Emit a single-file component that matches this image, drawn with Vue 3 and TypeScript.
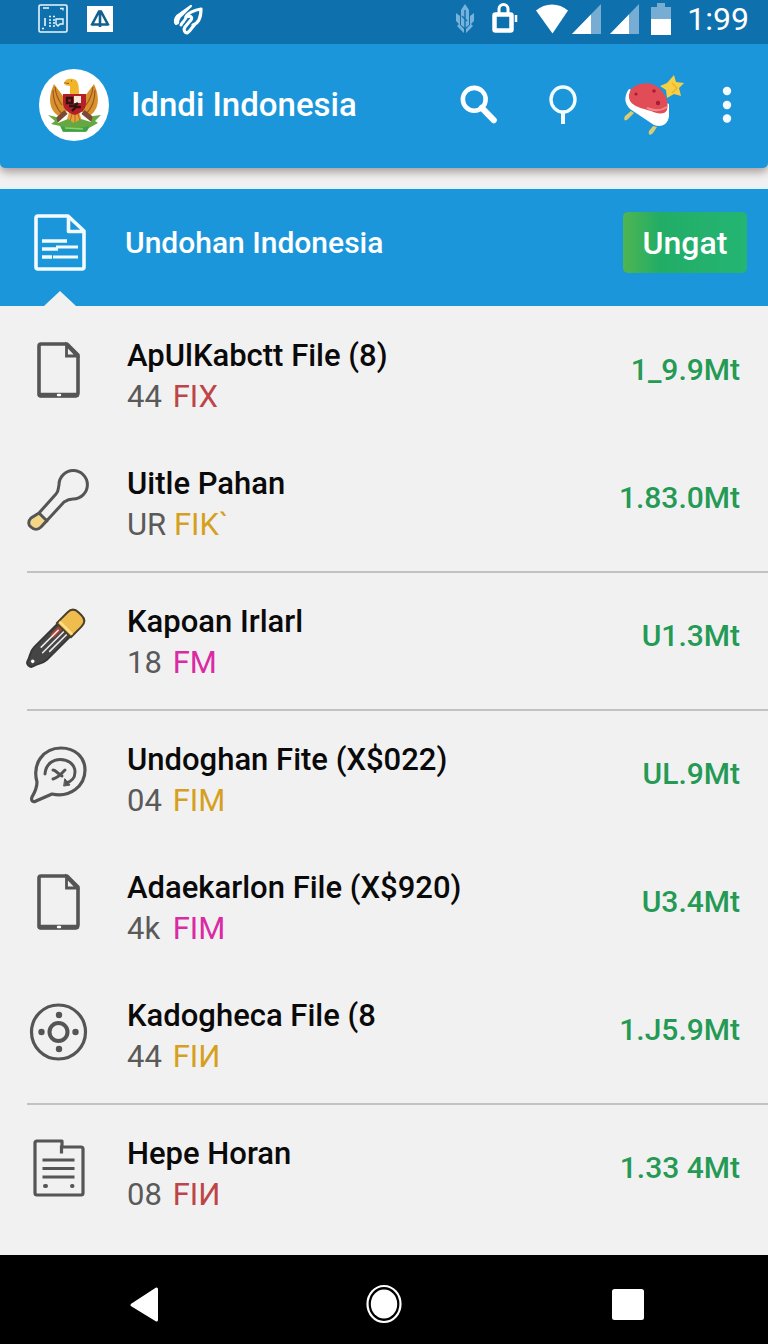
<script setup lang="ts">
type IconName = 'page' | 'brush' | 'pencil' | 'chat' | 'disc' | 'notes'
type Tone = 'red' | 'amber' | 'pink'

interface FileRow {
  icon: IconName
  title: string
  count: string
  tag: string
  tone: Tone
  size: string
}

const groups: FileRow[][] = [
  [
    { icon: 'page', title: 'ApUlKabctt File (8)', count: '44', tag: 'FIX', tone: 'red', size: '1_9.9Mt' },
    { icon: 'brush', title: 'Uitle Pahan', count: 'UR', tag: 'FIK`', tone: 'amber', size: '1.83.0Mt' },
  ],
  [{ icon: 'pencil', title: 'Kapoan Irlarl', count: '18', tag: 'FM', tone: 'pink', size: 'U1.3Mt' }],
  [
    { icon: 'chat', title: 'Undoghan Fite (X$022)', count: '04', tag: 'FIM', tone: 'amber', size: 'UL.9Mt' },
    { icon: 'page', title: 'Adaekarlon File (X$920)', count: '4k', tag: 'FIM', tone: 'pink', size: 'U3.4Mt' },
    { icon: 'disc', title: 'Kadogheca File (8', count: '44', tag: 'FIИ', tone: 'amber', size: '1.J5.9Mt' },
  ],
  [{ icon: 'notes', title: 'Hepe Horan', count: '08', tag: 'FIИ', tone: 'red', size: '1.33 4Mt' }],
]
</script>

<template>
  <div class="screen">
    <div class="status">
      <div class="status-side">
        <svg width="30" height="30" viewBox="0 0 30 30" fill="none" stroke="#e9f6fc">
          <rect x="1" y="1" width="28" height="27" rx="1.5" stroke-width="1.6" />
          <path d="M4 24.500h2M5 4h6M22 4.500h3v2" stroke-width="1.300" />
          <path d="M7 14v8M11 12.500h2M11 16h2M11 19h2M11 22h2M15 12.500h2M15 16h2M15 19h2M15 22h2" stroke-width="1.600" />
          <path d="M18 15h7v5h-3l-2 2-2-2z" stroke-width="1.400" />
        </svg>
        <svg class="after-box" width="26" height="30" viewBox="0 0 26 30">
          <path d="M0 2h26v26H0z" fill="#fff" />
          <path d="M4.500 21.500 12 7.500h2l7.500 14M5 20.500h16M13 8v15" fill="none" stroke="#12608f" stroke-width="2.600" />
        </svg>
        <svg class="after-letter" width="30" height="32" viewBox="0 0 30 32" fill="none" stroke="#fff" stroke-linecap="round" stroke-linejoin="round">
          <path d="M18 3 4 13c-2 2-3 6-1 8l2-1c0-4 2-7 5-9z" stroke-width="2.200" fill="#fff" />
          <path d="M13 14c1-4 9-7 15-8 0 8-2 14-8 16M13 14c4-2 8 0 4 4l-5 6c-2 3 0 6 2 6 4-2 5-6 8-9" stroke-width="3.200" />
          <path d="M13 14c0 3-4 5-5 8" stroke-width="3" />
        </svg>
      </div>
      <div class="status-side">
        <svg width="18" height="30" viewBox="0 0 18 30" fill="#77b2dc">
          <path d="M9 0 5 6v15l4 3 4-3V6zM0 9l4 3v9l4 4v4L1 22l2-2-3-3zM18 9l-4 3v9l-4 4v4l7-7-2-2 3-3z" />
          <path d="M9 6v21M6 12l5 5" stroke="#0e71ad" stroke-width="1.400" />
        </svg>
        <svg class="spaced" width="26" height="30" viewBox="0 0 26 30" fill="none" stroke="#fff">
          <path d="M7 9V5a4 4 0 0 1 9 0v4" stroke-width="3" />
          <rect x="2.500" y="10.500" width="17" height="16" rx="1" stroke-width="4.500" />
          <path d="M24 11v7" stroke-width="2.500" />
        </svg>
        <svg class="spaced" width="32" height="30" viewBox="0 0 32 30">
          <path d="M0 6.500C9-1.500 23-1.500 32 6.500L16.500 29.500z" fill="#fff" />
        </svg>
        <svg class="signal" width="29" height="30" viewBox="0 0 29 30">
          <path d="M29 0v30H0z" fill="#77add3" />
          <path d="M19 10.500V30H0z" fill="#fff" />
        </svg>
        <svg class="signal second" width="29" height="30" viewBox="0 0 29 30">
          <path d="M29 0v30H0z" fill="#77add3" />
          <path d="M19 10.500V30H0z" fill="#fff" />
        </svg>
        <svg class="battery" width="20" height="32" viewBox="0 0 20 32">
          <path d="M0 4h6V0h8v4h6v14H0z" fill="#77add3" />
          <path d="M0 16h20v16H0z" fill="#fff" />
        </svg>
        <time class="clock">1:99</time>
      </div>
    </div>

    <header class="bar">
      <svg class="emblem" width="70" height="72" viewBox="0 0 70 72">
        <ellipse cx="35" cy="36" rx="35" ry="36" fill="#fff" />
        <path d="M15 15c-6 13-6 26 6 33l7-6-4-15zM55 15c6 13 6 26-6 33l-7-6 4-15z" fill="#d9912e" />
        <path d="M14 21c0 10 3 18 9 24M16 18c1 9 4 14 7 18M56 21c0 10-3 18-9 24M54 18c-1 9-4 14-7 18" fill="none" stroke="#9d5720" stroke-width="1.200" />
        <path d="M25 14c1-4 5-5 9-4 5 1 6 5 6 15h-9v-8l-6-1 4-2z" fill="#f0b52b" />
        <path d="M25 14l5 .5M32 12h1" stroke="#8d5a17" stroke-width="1.200" />
        <path d="M27 43 17 52M44 43l10 8" stroke="#7b4a36" stroke-width="5" />
        <path d="M30 43h10l5 15H26z" fill="#e9a23a" />
        <path d="M33 45l-3 11M36 45v12M39 45l3 11" stroke="#b56c20" stroke-width="1" />
        <path d="M24 25h23v9c0 7-5 10-11 12-7-2-12-6-12-12z" fill="#b61f28" />
        <path d="M35 27h7v7h-7z" fill="#f6e9db" />
        <path d="M28 29h5v5h-5zM30 37h5l4-3M33 42l4-4h5" fill="none" stroke="#2a1513" stroke-width="2.400" />
        <path d="M9 46l8 2 2 6 10-4 6 4 7-4 10 3 2-6 8-1-6 6 3 2-9 5-3 4H24l-3-6-9-2 4-3z" fill="#64a842" />
        <path d="M22 57c8 3 18 3 28 0l-2 5H24z" fill="#38a34b" />
        <path d="M26 59l18 1" stroke="#8dd074" stroke-width="1.500" />
      </svg>
      <h1>Idndi Indonesia</h1>
      <div class="actions">
        <button class="action" aria-label="Search">
          <svg width="38" height="42" viewBox="0 0 40 42" fill="none" stroke="#fff">
            <circle cx="15" cy="15" r="12" stroke-width="4.800" />
            <path d="m23 24 12.500 13" stroke-width="6.500" stroke-linecap="round" />
          </svg>
        </button>
        <button class="action" aria-label="Locate">
          <svg width="30" height="40" viewBox="0 0 30 40" fill="none" stroke="#f4fcff">
            <ellipse cx="15" cy="14.500" rx="12" ry="12.500" stroke-width="3.400" />
            <path d="M15 27v12" stroke-width="4" />
          </svg>
        </button>
        <button class="action wide" aria-label="Gift">
          <svg width="62" height="62" viewBox="0 0 62 62">
            <path d="M9 37 3 42c-2 4 0 6 3 3l6-6zM31 52l-4 5c-1 4 1 5 4 2l4-6z" fill="#d9cc72" />
            <path d="M7 15c-5 7-5 14 1 20l24 16c8 3 14-1 15-9V30z" fill="#fff" />
            <path d="M8 17c5-9 22-11 30-2 6 6 9 13 7 21-2 5-10 4-16 1C19 34 6 32 7 21z" fill="#e24c57" />
            <path d="M25 34c7 3 14 3 20-1" stroke="#f28a8e" stroke-width="2" fill="none" />
            <circle cx="14" cy="20" r="1.600" fill="#a51f31" />
            <circle cx="32" cy="17" r="1.800" fill="#a51f31" />
            <circle cx="36" cy="29" r="2.200" fill="#a51f31" />
            <path d="m52 1 2 7 8 1-5 5 2 8-7-2-7 4-1-8-6-4 7-3z" fill="#f7cf45" />
            <path d="m50 9 5 5-5 5" fill="none" stroke="#eab62e" stroke-width="1.500" />
          </svg>
        </button>
        <button class="action slim" aria-label="More options">
          <svg width="10" height="38" viewBox="0 0 10 38" fill="#f4fcff">
            <circle cx="5" cy="5" r="4.200" />
            <circle cx="5" cy="19" r="4.200" />
            <circle cx="5" cy="32.500" r="4.200" />
          </svg>
        </button>
      </div>
    </header>

    <section class="banner">
      <svg class="banner-icon" width="64" height="64" viewBox="0 0 64 64" fill="none" stroke="#f2fbff" stroke-width="3.600" stroke-linejoin="round">
        <path d="M10 5h30l16 15v36a2 2 0 0 1-2 2H10a2 2 0 0 1-2-2V7a2 2 0 0 1 2-2z" />
        <path d="M40.500 5v15.500H56" />
        <path d="M14 30h25M14 38h16M14 46h10" />
        <path d="M28 36h22M25 46h25" stroke-width="3" />
      </svg>
      <h2>Undohan Indonesia</h2>
      <button class="cta">Ungat</button>
    </section>

    <main class="files">
      <ul v-for="(group, g) in groups" :key="g" class="group">
        <li v-for="row in group" :key="row.title" class="row">
          <svg class="icon" width="64" height="64" viewBox="0 0 64 64" fill="none" stroke="#555" stroke-width="3.600" stroke-linejoin="round" stroke-linecap="round">
            <template v-if="row.icon === 'page'">
              <path d="M14 5h26l11 11v38a3 3 0 0 1-3 3H14a2 2 0 0 1-2-2V7a2 2 0 0 1 2-2z" />
              <path d="M39.500 6v11H50z" stroke-width="2.800" stroke-linejoin="miter" />
              <path d="M13 56h37" stroke-width="4.500" />
              <path d="M31 56h2" stroke="#fff" stroke-width="2.400" />
            </template>
            <template v-else-if="row.icon === 'brush'">
              <path d="m12 46 9 9-7 6c-3 3-7 3-9 0-3-2-3-6 0-9z" fill="#f4d789" stroke="none" />
              <path d="M12 46 29 27c3-3 2-6 3-9a14.200 14.200 0 1 1 14 14c-4 0-6 1-9 3L14 60c-3 3-7 3-10 0-3-2-3-6 0-9zM12 46l8 8" stroke-width="3" />
            </template>
            <template v-else-if="row.icon === 'pencil'">
              <g transform="translate(5 57) rotate(-45)">
                <path d="M-2-4C3-5 5-9 12-9h34V9H12C7 9 3 5-2 4c-4-1-4-7 0-8z" fill="#464546" stroke="#383738" stroke-width="2" />
                <path d="M34-4h10" stroke="#a84435" stroke-width="5" />
                <path d="M17-4h24M14 1h30M20 5h24" stroke="#f0eeec" stroke-width="1.500" />
                <path d="M45-10h15c5 0 8 3 8 8v4c0 5-3 8-8 8H45z" fill="#eebd4d" stroke="#4b402f" stroke-width="2" />
                <path d="M48-8V8" stroke="#fbe08b" stroke-width="2.500" />
                <circle cx="1" cy="0" r="1.800" fill="#fff" stroke="none" />
              </g>
            </template>
            <template v-else-if="row.icon === 'chat'">
              <path d="M10 39C5 21 16 5 34 5c14 0 24 9 24 22 0 16-15 28-33 24L9 58c-4 2-5-1-4-4 3-5 5-9 5-15z" stroke-width="3.200" />
              <path d="M18 31c1-20 30-18 30-2 0 6-4 10-9 11" stroke-width="3" />
              <path d="m38 36 5 6-6 1z" fill="#555" stroke-width="1" />
              <path d="M26 27c3 0 6 5 9 6M38 27c-4 4-7 8-12 9" stroke-width="3" />
            </template>
            <template v-else-if="row.icon === 'disc'">
              <circle cx="31.500" cy="33" r="27" stroke-width="3.200" />
              <circle cx="31.500" cy="33" r="9" stroke-width="4" />
              <g fill="#555" stroke="none">
                <circle cx="32" cy="16" r="3.200" />
                <circle cx="32" cy="50" r="3.200" />
                <circle cx="14.500" cy="33" r="3.200" />
                <circle cx="48.500" cy="33" r="3.200" />
              </g>
            </template>
            <template v-else>
              <path d="M10 4h25v6h19a2 2 0 0 1 2 2v44a2 2 0 0 1-2 2H10a2 2 0 0 1-2-2V6a2 2 0 0 1 2-2zM34.500 10v5" stroke-width="3.200" stroke-linecap="square" />
              <path d="M17 23h29M17 31.500h29M17 40h29" stroke-width="3" stroke-linecap="square" />
              <path d="M18 49h1M45 49h.5" stroke-width="4" />
            </template>
          </svg>
          <div class="texts">
            <h3>{{ row.title }}</h3>
            <p><span class="count">{{ row.count }}</span> <span :class="row.tone">{{ row.tag }}</span></p>
          </div>
          <span class="size">{{ row.size }}</span>
        </li>
      </ul>
    </main>

    <nav class="nav">
      <button aria-label="Back">
        <svg width="30" height="40" viewBox="0 0 30 40">
          <path d="M28.500 4v31L4 20z" fill="#fff" stroke="#fff" stroke-width="3" stroke-linejoin="round" />
        </svg>
      </button>
      <button aria-label="Home">
        <svg width="36" height="44" viewBox="0 0 36 44">
          <ellipse cx="18" cy="21" rx="16.500" ry="18" fill="none" stroke="#fff" stroke-width="2.200" />
          <ellipse cx="18" cy="21" rx="13.200" ry="14.500" fill="#fff" />
        </svg>
      </button>
      <button aria-label="Recent apps">
        <svg width="32" height="32" viewBox="0 0 32 32">
          <rect width="32" height="31" rx="2.500" fill="#fff" />
        </svg>
      </button>
    </nav>
  </div>
</template>

<style>
body {
  margin: 0;
}
</style>

<style scoped>
.screen {
  display: flex;
  flex-direction: column;
  min-height: 100vh;
  background: #f2f1f1;
  color: #0a0a0a;
  font-family: Roboto, "Liberation Sans", sans-serif;
}

h1,
h2,
h3,
p,
ul {
  margin: 0;
  padding: 0;
}

button {
  padding: 0;
  border: 0;
  background: none;
  color: inherit;
  font-family: inherit;
  cursor: pointer;
}

svg {
  display: block;
  flex: none;
  overflow: visible;
}

.status {
  display: flex;
  justify-content: space-between;
  align-items: center;
  height: 44px;
  padding: 0 19px 6px 38px;
  box-sizing: border-box;
  background: #0e71ad;
  color: #fff;
}

.status-side {
  display: flex;
  align-items: center;
}

.after-box {
  margin-left: 19px;
}

.after-letter {
  margin-left: 60px;
}

.spaced {
  margin-left: 18px;
}

.signal {
  margin-left: 4px;
}

.signal.second {
  margin-left: 9px;
}

.battery {
  margin-left: 12px;
}

.clock {
  margin-left: 16px;
  font-size: 32px;
  line-height: 38px;
}

.bar {
  display: flex;
  align-items: center;
  height: 124px;
  padding: 0 25px 2px 39px;
  box-sizing: border-box;
  border-radius: 0 0 5px 5px;
  background: #1c96da;
  box-shadow: 0 4px 10px #a39a98;
  color: #fff;
  clip-path: inset(0 0 -19px 0);
}

h1 {
  margin-left: 22px;
  font-size: 33px;
  line-height: 40px;
  font-weight: 500;
  white-space: nowrap;
}

.actions {
  display: flex;
  gap: 20px;
  margin-left: auto;
}

.action {
  display: flex;
  align-items: center;
  justify-content: center;
  width: 64px;
  height: 64px;
}

.action.wide {
  width: 76px;
}

.action.slim {
  width: 32px;
}

.banner {
  position: relative;
  display: flex;
  align-items: center;
  height: 119px;
  margin-top: 19px;
  padding: 0 21px 10px 28px;
  box-sizing: border-box;
  border-top: 2px solid #dff3fb;
  background: #1c96da;
  color: #fff;
}

.banner::after {
  content: "";
  position: absolute;
  left: 44px;
  bottom: 0;
  width: 32px;
  height: 15px;
  background: #f2f1f1;
  clip-path: polygon(50% 0, 100% 100%, 0 100%);
}

h2 {
  margin-left: 33px;
  font-size: 30px;
  line-height: 40px;
  font-weight: 500;
}

.cta {
  width: 124px;
  height: 61px;
  margin-left: auto;
  border-radius: 5px;
  background: linear-gradient(90deg, #4fb551, #22ad66 30%, #24b573);
  color: #fff;
  font-size: 32px;
  font-weight: 500;
}

.files {
  flex: 1;
  padding-top: 1px;
}

.group {
  padding: 5px 0 3px;
  list-style: none;
}

.group + .group {
  border-top: 2px solid #c3c2c1;
  margin-left: 27px;
}

.group + .group .row {
  padding-left: 0;
}

.row {
  display: flex;
  align-items: center;
  min-height: 128px;
  padding: 0 28px 0 27px;
  box-sizing: border-box;
}

.icon {
  margin-bottom: 10px;
}

.texts {
  flex: 1;
  margin-left: 36px;
}

h3 {
  font-size: 31px;
  line-height: 41px;
  font-weight: 500;
}

p {
  color: #5a5a5a;
  font-size: 31px;
  line-height: 41px;
}

.count {
  display: inline-block;
  min-width: 38px;
}

.red {
  color: #bd4548;
}

.amber {
  color: #d6a01f;
}

.pink {
  color: #da2aa4;
}

.size {
  margin-bottom: 12px;
  color: #249a55;
  font-size: 30px;
  line-height: 40px;
  font-weight: 500;
}

.nav {
  display: grid;
  grid-template-columns: repeat(3, 1fr);
  height: 89px;
  padding: 0 18px;
  box-sizing: border-box;
  background: #000;
}

.nav button {
  display: flex;
  align-items: center;
  justify-content: center;
  padding-top: 10px;
}

.nav button:first-child {
  padding-left: 6px;
}
</style>
